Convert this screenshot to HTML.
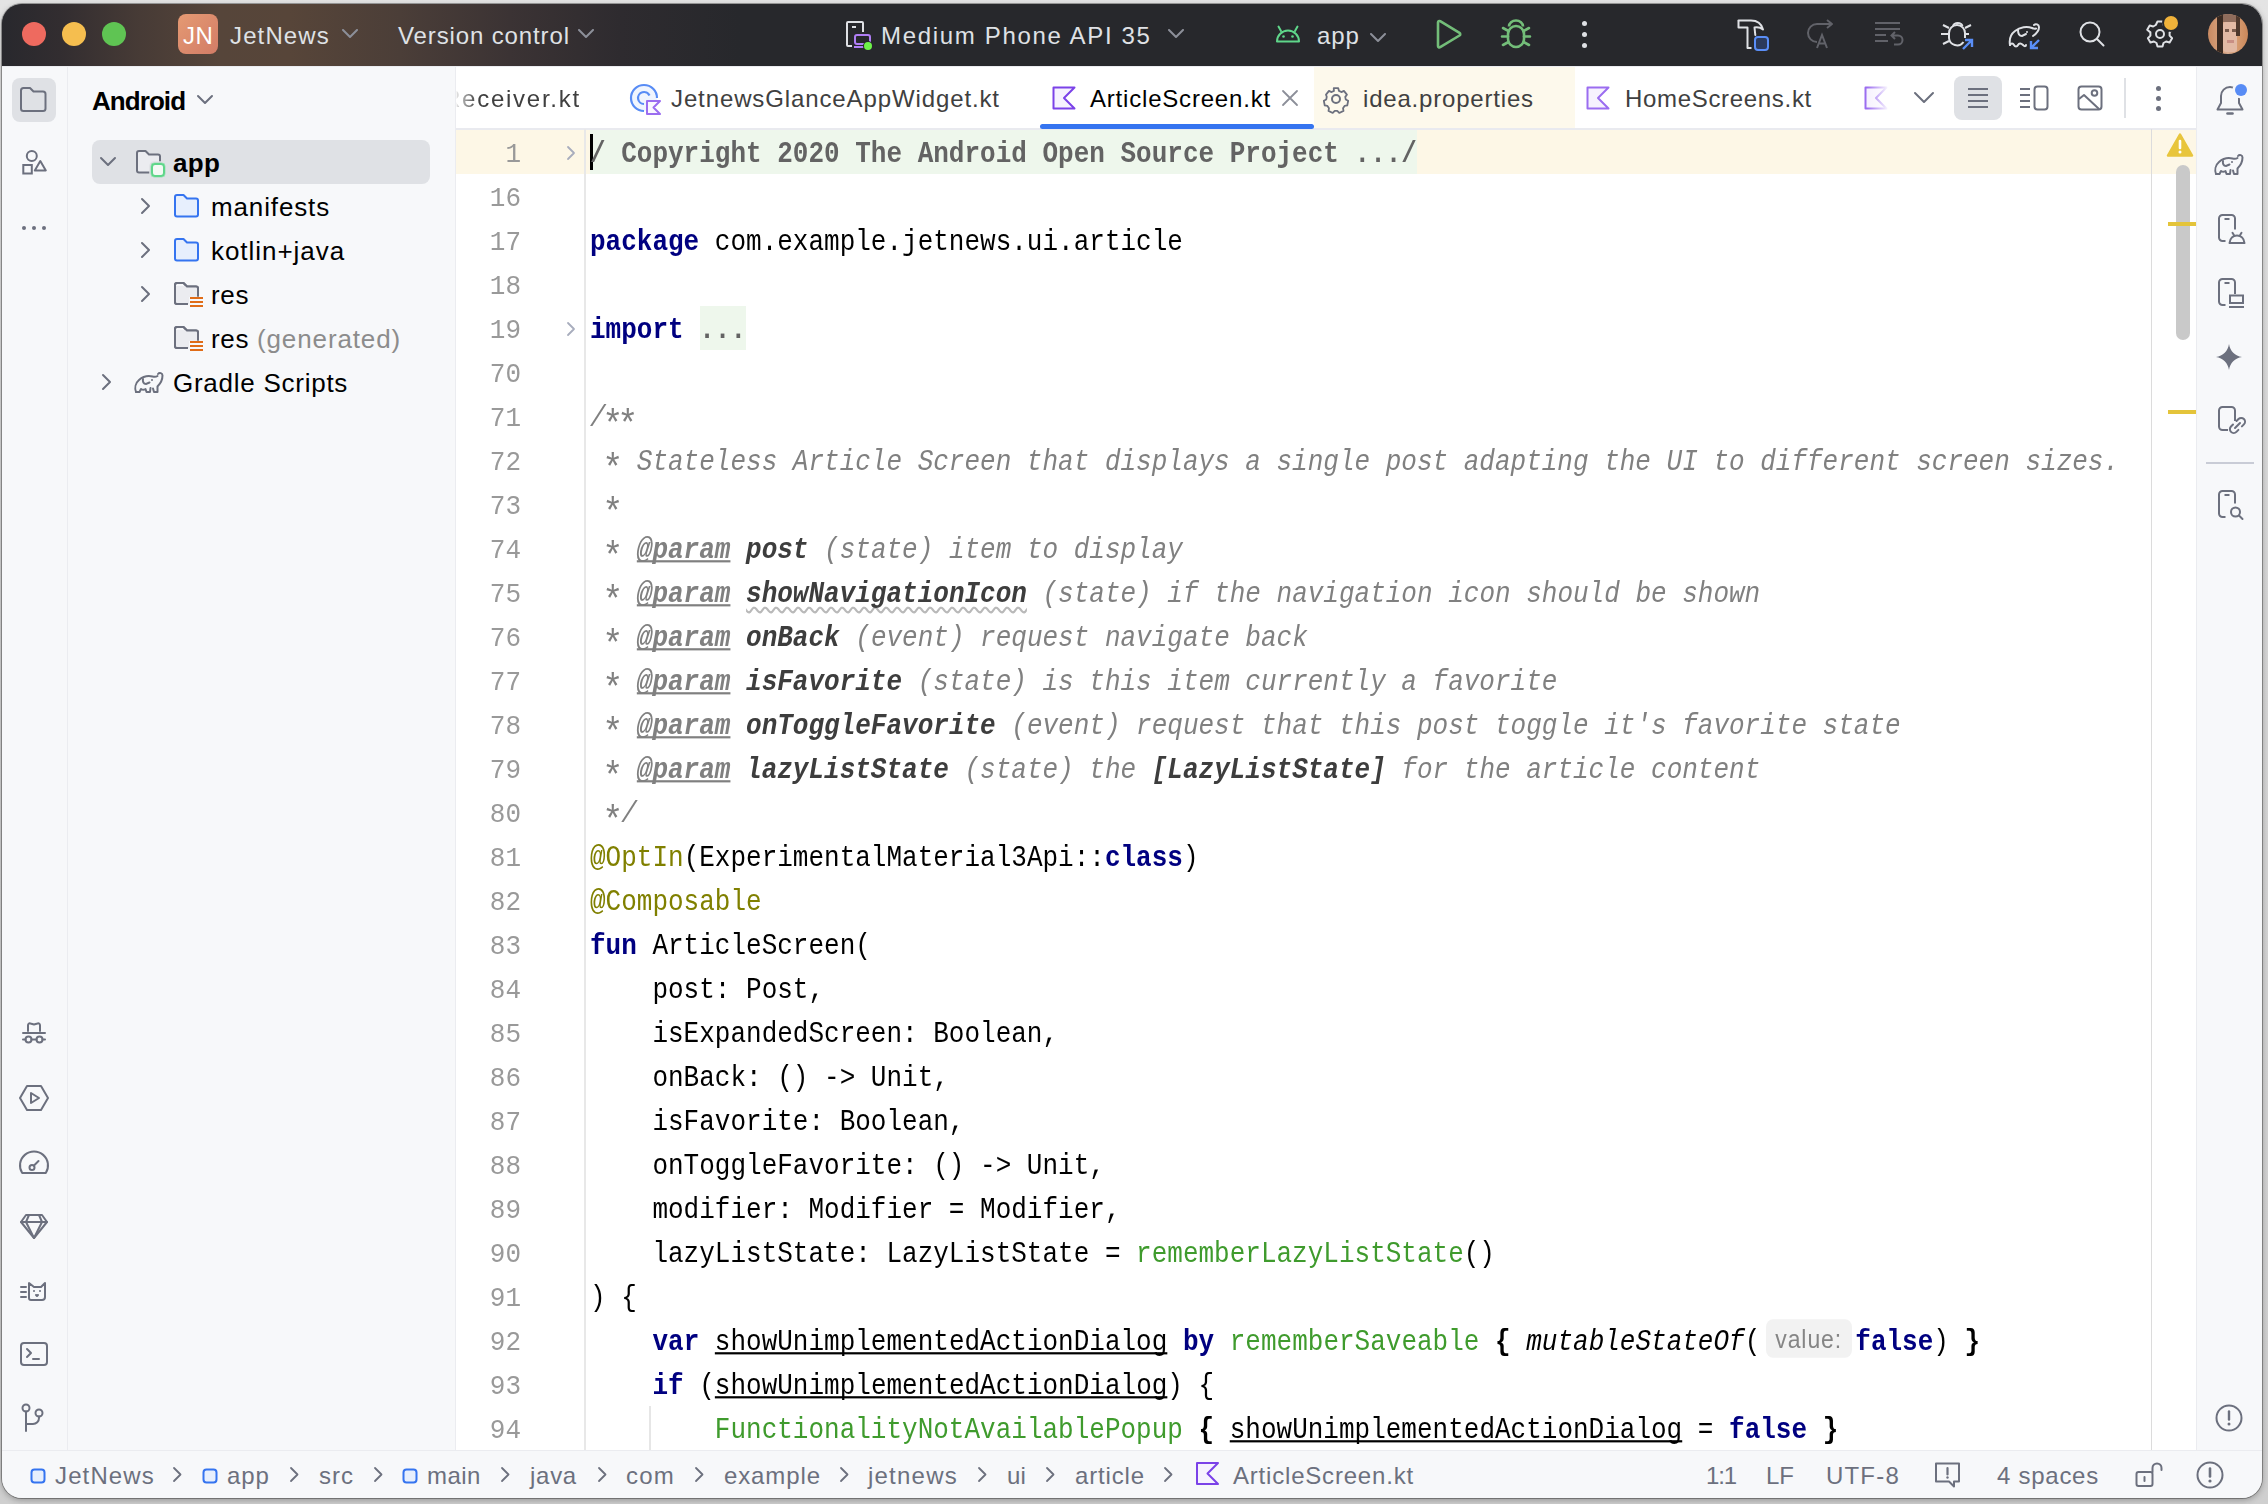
<!DOCTYPE html><html><head><meta charset="utf-8"><style>
html,body{margin:0;padding:0}
body{width:2268px;height:1504px;overflow:hidden;position:relative;background:linear-gradient(#e4e4e4 0px,#d6d6d6 40%,#cfcfcf 100%)}
#win{position:absolute;left:0;top:0;width:2268px;height:1504px;clip-path:inset(4px 6px 6px 2px round 20px);background:#f7f8fa}
#shadow{position:absolute;left:2px;top:4px;width:2260px;height:1494px;border-radius:20px;box-shadow:0 0 0 1px rgba(0,0,0,.3),0 2px 6px rgba(0,0,0,.3)}
</style></head><body><div id="shadow"></div><div id="win">
<div style="position:absolute;left:0px;top:0px;width:2268px;height:66px;background:#27282c;"></div>
<div style="position:absolute;left:0px;top:0px;width:900px;height:66px;background:linear-gradient(90deg, #28282d 0px, #322d30 60px, #473b36 140px, #56453a 220px, #574539 290px, #4b3e38 400px, #3b3334 510px, #2e2b2f 620px, #27282c 740px);"></div>
<div style="position:absolute;left:22px;top:22px;width:24px;height:24px;border-radius:50%;background:#ee6a5f"></div>
<div style="position:absolute;left:62px;top:22px;width:24px;height:24px;border-radius:50%;background:#f5be4f"></div>
<div style="position:absolute;left:102px;top:22px;width:24px;height:24px;border-radius:50%;background:#5fc453"></div>
<div style="position:absolute;left:178px;top:14px;width:40px;height:40px;border-radius:8px;background:linear-gradient(135deg,#e59a73,#d27c66)"></div>
<div style="position:absolute;left:183px;top:22.28px;font-family:'Liberation Sans',sans-serif;font-size:24px;line-height:normal;color:#ffffff;font-weight:normal;font-style:normal;letter-spacing:0.5px;white-space:pre;">JN</div>
<div style="position:absolute;left:230px;top:22.28px;font-family:'Liberation Sans',sans-serif;font-size:24px;line-height:normal;color:#dfe1e5;font-weight:normal;font-style:normal;letter-spacing:1.128px;white-space:pre;">JetNews</div>
<svg style="position:absolute;left:342px;top:29px;" width="17" height="10" viewBox="0 0 17 10" fill="none"><path d="M1 1l7 7 7-7" stroke="#8c8f99" stroke-width="2" stroke-linecap="round" stroke-linejoin="round"/></svg>
<div style="position:absolute;left:398px;top:22.28px;font-family:'Liberation Sans',sans-serif;font-size:24px;line-height:normal;color:#dfe1e5;font-weight:normal;font-style:normal;letter-spacing:0.878px;white-space:pre;">Version control</div>
<svg style="position:absolute;left:578px;top:29px;" width="17" height="10" viewBox="0 0 17 10" fill="none"><path d="M1 1l7 7 7-7" stroke="#8c8f99" stroke-width="2" stroke-linecap="round" stroke-linejoin="round"/></svg>
<svg style="position:absolute;left:840px;top:16px;" width="40" height="40" viewBox="0 0 40 40" fill="none"><path d="M12 30H8a1 1 0 0 1-1-1V7a1 1 0 0 1 1-1h14a1 1 0 0 1 1 1v9" stroke="#dfe1e5" stroke-width="2"/><rect x="12" y="10" width="4" height="2" fill="#dfe1e5"/><rect x="15" y="19" width="15" height="9" rx="2" stroke="#b07ef5" stroke-width="2"/><rect x="14" y="30" width="12" height="2" fill="#b07ef5"/><circle cx="28" cy="30" r="5" fill="#27282c"/><circle cx="28" cy="30" r="4" fill="#6ef24a"/></svg>
<div style="position:absolute;left:881px;top:22.28px;font-family:'Liberation Sans',sans-serif;font-size:24px;line-height:normal;color:#dfe1e5;font-weight:normal;font-style:normal;letter-spacing:1.673px;white-space:pre;">Medium Phone API 35</div>
<svg style="position:absolute;left:1168px;top:29px;" width="17" height="10" viewBox="0 0 17 10" fill="none"><path d="M1 1l7 7 7-7" stroke="#8c8f99" stroke-width="2" stroke-linecap="round" stroke-linejoin="round"/></svg>
<svg style="position:absolute;left:1274px;top:22px;" width="28" height="22" viewBox="0 0 28 22" fill="none"><path d="M3 19.5a11 11 0 0 1 22 0z" stroke="#5fd68a" stroke-width="2" stroke-linejoin="round"/><path d="M7 9L4.5 4.5M21 9l2.5-4.5" stroke="#5fd68a" stroke-width="2" stroke-linecap="round"/><circle cx="9.5" cy="14.5" r="1.3" fill="#5fd68a"/><circle cx="18.5" cy="14.5" r="1.3" fill="#5fd68a"/></svg>
<div style="position:absolute;left:1317px;top:22.28px;font-family:'Liberation Sans',sans-serif;font-size:24px;line-height:normal;color:#dfe1e5;font-weight:normal;font-style:normal;letter-spacing:0.959px;white-space:pre;">app</div>
<svg style="position:absolute;left:1370px;top:33px;" width="17" height="10" viewBox="0 0 17 10" fill="none"><path d="M1 1l7 7 7-7" stroke="#8c8f99" stroke-width="2" stroke-linecap="round" stroke-linejoin="round"/></svg>
<svg style="position:absolute;left:1432px;top:17px;" width="34" height="34" viewBox="0 0 34 34" fill="none"><path d="M6 5.5v23.5c0 1.2 1.2 1.8 2.2 1.2l19.3-11.7c1-.6 1-2 0-2.6L8.2 4.2C7.2 3.6 6 4.3 6 5.5z" stroke="#73bd79" stroke-width="2.6" stroke-linejoin="round"/></svg>
<svg style="position:absolute;left:1498px;top:17px;" width="36" height="34" viewBox="0 0 36 34" fill="none"><path d="M11 9.5a7 6 0 0 1 14 0" stroke="#73bd79" stroke-width="2.6"/><rect x="10" y="9" width="16" height="21" rx="8" stroke="#73bd79" stroke-width="2.6"/><path d="M10 19.5H4M26 19.5h6M10.5 14L5 11M25.5 14l5.5-3M10.5 25l-5.5 3M25.5 25l5.5 3" stroke="#73bd79" stroke-width="2.6" stroke-linecap="round"/></svg>
<div style="position:absolute;left:1581.5px;top:20.5px;width:5px;height:5px;border-radius:50%;background:#dfe1e5"></div>
<div style="position:absolute;left:1581.5px;top:31.5px;width:5px;height:5px;border-radius:50%;background:#dfe1e5"></div>
<div style="position:absolute;left:1581.5px;top:42.5px;width:5px;height:5px;border-radius:50%;background:#dfe1e5"></div>
<svg style="position:absolute;left:1734px;top:16px;" width="40" height="40" viewBox="0 0 40 40" fill="none"><path d="M4.5 4.5H17c6 0 10.5 3.5 12 9-2.5-2-5.5-2.5-8.5-2l.8 7.5" stroke="#dfe1e5" stroke-width="2" stroke-linejoin="round" stroke-linecap="round"/><path d="M4.5 4.5v7h9V32h4" stroke="#dfe1e5" stroke-width="2" stroke-linejoin="round"/><rect x="21" y="21" width="13" height="13" rx="3" fill="#2b3a5c" stroke="#5a8ef7" stroke-width="2"/></svg>
<svg style="position:absolute;left:1804px;top:16px;" width="34" height="36" viewBox="0 0 34 36" fill="none"><path d="M13 26a9 9 0 0 1 0-18h14" stroke="#616269" stroke-width="2"/><path d="M23 4l5 4-5 4" stroke="#616269" stroke-width="2" stroke-linejoin="round"/><path d="M13 32l5-13 5 13M15 27.5h6" stroke="#616269" stroke-width="2"/></svg>
<svg style="position:absolute;left:1872px;top:18px;" width="34" height="32" viewBox="0 0 34 32" fill="none"><path d="M3 5h25M3 11h25M3 17h11M3 23h13" stroke="#616269" stroke-width="2"/><path d="M22 26.5h4a4.5 4.5 0 0 0 0-9h-6M23 14l-3.5 3.5 3.5 3.5" stroke="#616269" stroke-width="2"/></svg>
<svg style="position:absolute;left:1938px;top:16px;" width="40" height="40" viewBox="0 0 40 40" fill="none"><path d="M15 10a5 4.5 0 0 1 9.5 0" stroke="#dfe1e5" stroke-width="2"/><path d="M25.5 26A8 8 0 0 1 11 22V17a8 8 0 0 1 16 0v5" stroke="#dfe1e5" stroke-width="2"/><path d="M11 18H3M11 12L5 9M11 25L5 28M27 12l6-3M27 18h4" stroke="#dfe1e5" stroke-width="2"/><path d="M25 33l9-9M27 24h7v7" stroke="#5a8ef7" stroke-width="2.4"/></svg>
<svg style="position:absolute;left:2005px;top:16px;" width="40" height="40" viewBox="0 0 40 40" fill="none"><path d="M5 29c-1-6 1-11 5-14 5-4 12-5 17-3 2 1 3 1 4 .5M29 9a3 3 0 0 1 5 2c0 4-3 7-6 9" stroke="#dfe1e5" stroke-width="2" stroke-linecap="round"/><path d="M5 29c1-2 3-2 4 0s3 2 4 0 3-2 5 0 3 1 3 0" stroke="#dfe1e5" stroke-width="2" stroke-linecap="round"/><path d="M13 14c0 3 1 6 4 6l4-2" stroke="#dfe1e5" stroke-width="2" stroke-linecap="round"/><circle cx="22" cy="16" r="1" fill="#dfe1e5"/><path d="M34 24l-8 8M26 25v7h7" stroke="#5a8ef7" stroke-width="2.4"/></svg>
<svg style="position:absolute;left:2076px;top:18px;" width="32" height="32" viewBox="0 0 32 32" fill="none"><circle cx="14" cy="14" r="9.5" stroke="#dfe1e5" stroke-width="2"/><path d="M21 21l6.5 6.5" stroke="#dfe1e5" stroke-width="2" stroke-linecap="round"/></svg>
<svg style="position:absolute;left:2142px;top:16px;" width="36" height="36" viewBox="0 0 36 36" fill="none"><path d="M15.5 5.5h5l1 3.5 2.6 1.5 3.5-1 2.5 4.3-2.5 2.6v3.2l2.5 2.6-2.5 4.3-3.5-1-2.6 1.5-1 3.5h-5l-1-3.5-2.6-1.5-3.5 1-2.5-4.3 2.5-2.6v-3.2L5.2 13.8l2.5-4.3 3.5 1 2.6-1.5z" stroke="#dfe1e5" stroke-width="2" stroke-linejoin="round"/><circle cx="18" cy="18" r="4" stroke="#dfe1e5" stroke-width="2"/></svg>
<div style="position:absolute;left:2164px;top:16px;width:14px;height:14px;border-radius:50%;background:#f0b23a;box-shadow:0 0 0 2px #27282c"></div>
<div style="position:absolute;left:2208px;top:14px;width:40px;height:40px;border-radius:50%;background:linear-gradient(90deg,#c98a62 0,#d8a07a 30%,#dcae92 50%,#d59a6f 75%,#c9875a 100%);overflow:hidden"><div style="position:absolute;left:9px;top:0px;width:6px;height:40px;background:#3a2a22"></div><div style="position:absolute;left:15px;top:0px;width:14px;height:8px;background:#8f6c5c"></div><div style="position:absolute;left:15px;top:8px;width:14px;height:30px;background:#e2b9a4;border-radius:3px"></div><div style="position:absolute;left:17px;top:15px;width:4px;height:3px;background:#7a5b4c"></div><div style="position:absolute;left:24px;top:15px;width:4px;height:3px;background:#7a5b4c"></div><div style="position:absolute;left:19px;top:26px;width:7px;height:3px;background:#c98f84"></div><div style="position:absolute;left:28px;top:2px;width:4px;height:20px;background:#4d372c"></div></div>
<div style="position:absolute;left:2px;top:66px;width:2260px;height:1px;background:#ebecf0;"></div>
<div style="position:absolute;left:67px;top:67px;width:1px;height:1383px;background:#ebecf0;"></div>
<div style="position:absolute;left:455px;top:67px;width:1px;height:1383px;background:#ebecf0;"></div>
<div style="position:absolute;left:456px;top:67px;width:1740px;height:1383px;background:#ffffff;"></div>
<div style="position:absolute;left:2196px;top:67px;width:1px;height:1383px;background:#ebecf0;"></div>
<div style="position:absolute;left:2px;top:1450px;width:2260px;height:1px;background:#ebecf0;"></div>
<div style="position:absolute;left:12px;top:78px;width:44px;height:44px;background:#dfe1e5;border-radius:8px"></div>
<svg style="position:absolute;left:19px;top:86px;" width="30" height="28" viewBox="0 0 30 28" fill="none"><path d="M2 4.5A2.5 2.5 0 0 1 4.5 2h6.5l3.5 3.5h9.5A2.5 2.5 0 0 1 26.5 8v14.5a2.5 2.5 0 0 1-2.5 2.5H4.5A2.5 2.5 0 0 1 2 22.5z" stroke="#6c707e" stroke-width="2" stroke-linejoin="round"/></svg>
<svg style="position:absolute;left:19px;top:148px;" width="30" height="30" viewBox="0 0 30 30" fill="none"><circle cx="12.8" cy="8" r="5" stroke="#6c707e" stroke-width="2"/><rect x="4.3" y="17" width="8.5" height="8.5" stroke="#6c707e" stroke-width="2"/><path d="M21.3 13l5.5 9.5h-11z" stroke="#6c707e" stroke-width="2" stroke-linejoin="round"/></svg>
<div style="position:absolute;left:22px;top:226px;width:4px;height:4px;border-radius:50%;background:#6c707e"></div>
<div style="position:absolute;left:32px;top:226px;width:4px;height:4px;border-radius:50%;background:#6c707e"></div>
<div style="position:absolute;left:42px;top:226px;width:4px;height:4px;border-radius:50%;background:#6c707e"></div>
<svg style="position:absolute;left:19px;top:1019px;" width="30" height="30" viewBox="0 0 30 30" fill="none"><path d="M9 12V6.5C9 5 10 4 11.5 4.5L15 5.5l3.5-1C20 4 21 5 21 6.5V12" stroke="#6c707e" stroke-width="2" stroke-linejoin="round" stroke-linecap="round"/><path d="M4 14h22" stroke="#6c707e" stroke-width="2" stroke-linejoin="round" stroke-linecap="round"/><circle cx="9.5" cy="20.5" r="3" stroke="#6c707e" stroke-width="2" stroke-linejoin="round" stroke-linecap="round"/><circle cx="20.5" cy="20.5" r="3" stroke="#6c707e" stroke-width="2" stroke-linejoin="round" stroke-linecap="round"/><path d="M12.5 20.5h5M4 20.5h2.5M23.5 20.5H26" stroke="#6c707e" stroke-width="2" stroke-linejoin="round" stroke-linecap="round"/></svg>
<svg style="position:absolute;left:18px;top:1082px;" width="32" height="32" viewBox="0 0 32 32" fill="none"><path d="M9 4h14l7 12-7 12H9L2 16z" stroke="#6c707e" stroke-width="2" stroke-linejoin="round" stroke-linecap="round"/><path d="M13 11v10l8-5z" stroke="#6c707e" stroke-width="2" stroke-linejoin="round" stroke-linecap="round"/></svg>
<svg style="position:absolute;left:18px;top:1150px;" width="32" height="32" viewBox="0 0 32 32" fill="none"><path d="M4.2 23A14 14 0 1 1 27.8 23z" stroke="#6c707e" stroke-width="2" stroke-linejoin="round" stroke-linecap="round"/><circle cx="14" cy="17.5" r="2.5" stroke="#6c707e" stroke-width="2" stroke-linejoin="round" stroke-linecap="round"/><path d="M16 15.5l4.5-4.5" stroke="#6c707e" stroke-width="2" stroke-linejoin="round" stroke-linecap="round"/></svg>
<svg style="position:absolute;left:18px;top:1210px;" width="32" height="32" viewBox="0 0 32 32" fill="none"><path d="M8 5h16l5 7-13 16L3 12z" stroke="#6c707e" stroke-width="2" stroke-linejoin="round" stroke-linecap="round"/><path d="M3 12h26M11 5l-3 7 8 16 8-16-3-7" stroke="#6c707e" stroke-width="2" stroke-linejoin="round" stroke-linecap="round"/></svg>
<svg style="position:absolute;left:18px;top:1274px;" width="32" height="32" viewBox="0 0 32 32" fill="none"><path d="M11 9v15c0 1 1 2 2 2h11c1.5 0 3-1 3-3V9l-4 4h-7z" stroke="#6c707e" stroke-width="2" stroke-linejoin="round" stroke-linecap="round"/><path d="M3 13h5M3 18h5M3 23h5" stroke="#6c707e" stroke-width="2" stroke-linejoin="round" stroke-linecap="round"/><circle cx="16" cy="17" r="1" fill="#6c707e"/><circle cx="22" cy="17" r="1" fill="#6c707e"/><path d="M18 21l1 1 1-1" stroke="#6c707e" stroke-width="2" stroke-linejoin="round" stroke-linecap="round"/></svg>
<svg style="position:absolute;left:18px;top:1338px;" width="32" height="32" viewBox="0 0 32 32" fill="none"><rect x="3" y="5" width="26" height="22" rx="3" stroke="#6c707e" stroke-width="2" stroke-linejoin="round" stroke-linecap="round"/><path d="M9 11l4 4-4 4M15 21h6" stroke="#6c707e" stroke-width="2" stroke-linejoin="round" stroke-linecap="round"/></svg>
<svg style="position:absolute;left:18px;top:1402px;" width="32" height="32" viewBox="0 0 32 32" fill="none"><circle cx="8" cy="6" r="3.5" stroke="#6c707e" stroke-width="2" stroke-linejoin="round" stroke-linecap="round"/><circle cx="21" cy="11" r="3.5" stroke="#6c707e" stroke-width="2" stroke-linejoin="round" stroke-linecap="round"/><path d="M8 9.5V29M8 22h7a6 6 0 0 0 6-6v-1.5" stroke="#6c707e" stroke-width="2" stroke-linejoin="round" stroke-linecap="round"/></svg>
<div style="position:absolute;left:92px;top:86.47px;font-family:'Liberation Sans',sans-serif;font-size:26px;line-height:normal;color:#000000;font-weight:bold;font-style:normal;letter-spacing:-0.938px;white-space:pre;">Android</div>
<svg style="position:absolute;left:196px;top:94px;" width="18" height="12" viewBox="0 0 18 12" fill="none"><path d="M2 2l7 7 7-7" stroke="#6c707e" stroke-width="2" stroke-linecap="round" stroke-linejoin="round"/></svg>
<div style="position:absolute;left:92px;top:140px;width:338px;height:44px;background:#dfe1e5;border-radius:8px"></div>
<svg style="position:absolute;left:98px;top:155px;" width="20" height="14" viewBox="0 0 20 14" fill="none"><path d="M3 3l7 7 7-7" stroke="#6c707e" stroke-width="2" stroke-linecap="round" stroke-linejoin="round"/></svg>
<svg style="position:absolute;left:135px;top:149px;" width="34" height="32" viewBox="0 0 34 32" fill="none"><path d="M2 4a2 2 0 0 1 2-2h6.5l3.5 3.5h9a2 2 0 0 1 2 2v14a2 2 0 0 1-2 2H4a2 2 0 0 1-2-2z" fill="#ebecf0" stroke="#6c707e" stroke-width="2" stroke-linejoin="round"/><rect x="16" y="14" width="14" height="14" rx="3.5" fill="#f3f9f4" stroke="#5fd68a" stroke-width="2" style="paint-order:stroke"/><rect x="15" y="13" width="16" height="16" rx="4" fill="none" stroke="#dfe1e5" stroke-width="1.5"/><rect x="17" y="15" width="12" height="12" rx="3" fill="#f3f9f4" stroke="#5fd68a" stroke-width="2"/></svg>
<div style="position:absolute;left:173px;top:148.47px;font-family:'Liberation Sans',sans-serif;font-size:26px;line-height:normal;color:#000000;font-weight:bold;font-style:normal;letter-spacing:0.285px;white-space:pre;">app</div>
<svg style="position:absolute;left:140px;top:197px;" width="12" height="18" viewBox="0 0 12 18" fill="none"><path d="M2 2l7 7-7 7" stroke="#6c707e" stroke-width="2" stroke-linecap="round" stroke-linejoin="round"/></svg>
<svg style="position:absolute;left:173px;top:193px;" width="30" height="28" viewBox="0 0 30 28" fill="none"><path d="M2 4a2 2 0 0 1 2-2h6.5l3.5 3.5h9a2 2 0 0 1 2 2v14a2 2 0 0 1-2 2H4a2 2 0 0 1-2-2z" fill="#e7effd" stroke="#3574f0" stroke-width="2" stroke-linejoin="round"/></svg>
<div style="position:absolute;left:211px;top:192.47px;font-family:'Liberation Sans',sans-serif;font-size:26px;line-height:normal;color:#000000;font-weight:normal;font-style:normal;letter-spacing:0.869px;white-space:pre;">manifests</div>
<svg style="position:absolute;left:140px;top:241px;" width="12" height="18" viewBox="0 0 12 18" fill="none"><path d="M2 2l7 7-7 7" stroke="#6c707e" stroke-width="2" stroke-linecap="round" stroke-linejoin="round"/></svg>
<svg style="position:absolute;left:173px;top:237px;" width="30" height="28" viewBox="0 0 30 28" fill="none"><path d="M2 4a2 2 0 0 1 2-2h6.5l3.5 3.5h9a2 2 0 0 1 2 2v14a2 2 0 0 1-2 2H4a2 2 0 0 1-2-2z" fill="#e7effd" stroke="#3574f0" stroke-width="2" stroke-linejoin="round"/></svg>
<div style="position:absolute;left:211px;top:236.47px;font-family:'Liberation Sans',sans-serif;font-size:26px;line-height:normal;color:#000000;font-weight:normal;font-style:normal;letter-spacing:0.955px;white-space:pre;">kotlin+java</div>
<svg style="position:absolute;left:140px;top:285px;" width="12" height="18" viewBox="0 0 12 18" fill="none"><path d="M2 2l7 7-7 7" stroke="#6c707e" stroke-width="2" stroke-linecap="round" stroke-linejoin="round"/></svg>
<svg style="position:absolute;left:173px;top:281px;" width="34" height="30" viewBox="0 0 34 30" fill="none"><path d="M2 4a2 2 0 0 1 2-2h6.5l3.5 3.5h9a2 2 0 0 1 2 2v8" fill="none" stroke="#6c707e" stroke-width="2" stroke-linejoin="round"/><path d="M2 4v17a2 2 0 0 0 2 2h11" stroke="#6c707e" stroke-width="2"/><path d="M3 5h21v11h-8v7H3z" fill="#ebecf0"/><path d="M2 4a2 2 0 0 1 2-2h6.5l3.5 3.5h9a2 2 0 0 1 2 2v8M2 4v17a2 2 0 0 0 2 2h11" fill="none" stroke="#6c707e" stroke-width="2" stroke-linejoin="round"/><path d="M17 17h13M17 21h13M17 25h13" stroke="#e06c17" stroke-width="2"/></svg>
<div style="position:absolute;left:211px;top:280.47px;font-family:'Liberation Sans',sans-serif;font-size:26px;line-height:normal;color:#000000;font-weight:normal;font-style:normal;letter-spacing:0.654px;white-space:pre;">res</div>
<svg style="position:absolute;left:173px;top:325px;" width="34" height="30" viewBox="0 0 34 30" fill="none"><path d="M2 4a2 2 0 0 1 2-2h6.5l3.5 3.5h9a2 2 0 0 1 2 2v8" fill="none" stroke="#6c707e" stroke-width="2" stroke-linejoin="round"/><path d="M2 4v17a2 2 0 0 0 2 2h11" stroke="#6c707e" stroke-width="2"/><path d="M3 5h21v11h-8v7H3z" fill="#ebecf0"/><path d="M2 4a2 2 0 0 1 2-2h6.5l3.5 3.5h9a2 2 0 0 1 2 2v8M2 4v17a2 2 0 0 0 2 2h11" fill="none" stroke="#6c707e" stroke-width="2" stroke-linejoin="round"/><path d="M17 17h13M17 21h13M17 25h13" stroke="#e06c17" stroke-width="2"/></svg>
<div style="position:absolute;left:211px;top:324.47px;font-family:'Liberation Sans',sans-serif;font-size:26px;line-height:normal;color:#000000;font-weight:normal;font-style:normal;letter-spacing:0.654px;white-space:pre;">res</div>
<div style="position:absolute;left:257px;top:324.47px;font-family:'Liberation Sans',sans-serif;font-size:26px;line-height:normal;color:#8c8c8c;font-weight:normal;font-style:normal;letter-spacing:0.878px;white-space:pre;">(generated)</div>
<svg style="position:absolute;left:101px;top:373px;" width="12" height="18" viewBox="0 0 12 18" fill="none"><path d="M2 2l7 7-7 7" stroke="#6c707e" stroke-width="2" stroke-linecap="round" stroke-linejoin="round"/></svg>
<svg style="position:absolute;left:132px;top:366px;" width="38" height="30" viewBox="0 0 38 30" fill="none"><path d="M4 26c-1.5-4-.5-9 3-12 4-3.5 9-4.5 13.5-3.5 2 .5 3.5.5 5-.5M26 8a2.5 2.5 0 0 1 4.5 1.5c0 4-2 8-5 11v5.5h-3.5l-1-3.5" stroke="#6c707e" stroke-width="2" stroke-linecap="round" stroke-linejoin="round"/><path d="M4 26h3.5l1.5-3c1.5 1 3 1 4.5 0l1 3H18l.5-4" stroke="#6c707e" stroke-width="2" stroke-linecap="round" stroke-linejoin="round"/><path d="M11 13c-.5 2.5.5 5 3 5l3.5-1.5" stroke="#6c707e" stroke-width="2" stroke-linecap="round"/><circle cx="20" cy="14" r="1" fill="#6c707e"/></svg>
<div style="position:absolute;left:173px;top:368.47px;font-family:'Liberation Sans',sans-serif;font-size:26px;line-height:normal;color:#000000;font-weight:normal;font-style:normal;letter-spacing:0.740px;white-space:pre;">Gradle Scripts</div>
<svg style="position:absolute;left:2212px;top:80px;" width="36" height="36" viewBox="0 0 36 36" fill="none"><path d="M5.5 29.5h25l-3.5-6.5v-7a9 9 0 0 0-18 0v7z" stroke="#6c707e" stroke-width="2" stroke-linejoin="round"/><path d="M15.5 33.5h5" stroke="#6c707e" stroke-width="2.6" stroke-linecap="round"/></svg>
<div style="position:absolute;left:2234.5px;top:83.5px;width:12px;height:12px;border-radius:50%;background:#588cf5;box-shadow:0 0 0 2.5px #f7f8fa"></div>
<svg style="position:absolute;left:2212px;top:148px;" width="36" height="32" viewBox="0 0 36 32" fill="none"><path d="M4 26c-1.5-4-.5-9 3-12 4-3.5 9-4.5 13.5-3.5 2 .5 3.5.5 5-.5M26 8a2.5 2.5 0 0 1 4.5 1.5c0 4-2 8-5 11v5.5h-3.5l-1-3.5" stroke="#6c707e" stroke-width="2" stroke-linecap="round" stroke-linejoin="round"/><path d="M4 26h3.5l1.5-3c1.5 1 3 1 4.5 0l1 3H18l.5-4" stroke="#6c707e" stroke-width="2" stroke-linecap="round" stroke-linejoin="round"/><path d="M11 13c-.5 2.5.5 5 3 5l3.5-1.5" stroke="#6c707e" stroke-width="2" stroke-linecap="round"/><circle cx="20" cy="14" r="1" fill="#6c707e"/></svg>
<svg style="position:absolute;left:2212px;top:212px;" width="36" height="36" viewBox="0 0 36 36" fill="none"><path d="M13.5 29H10.5a3.5 3.5 0 0 1-3.5-3.5v-19A3.5 3.5 0 0 1 10.5 3h9A3.5 3.5 0 0 1 23 6.5v11" stroke="#6c707e" stroke-width="2" stroke-linecap="butt"/><path d="M12.5 7h5" stroke="#6c707e" stroke-width="2"/><path d="M17.5 31c.5-4.5 3.5-7.5 7.5-7.5s7 3 7.5 7.5z" stroke="#6c707e" stroke-width="2" stroke-linejoin="round" stroke-linecap="round"/><path d="M20.5 20.8l1.5 2.4M29.5 20.8l-1.5 2.4" stroke="#6c707e" stroke-width="2" stroke-linecap="round"/></svg>
<svg style="position:absolute;left:2212px;top:276px;" width="36" height="36" viewBox="0 0 36 36" fill="none"><path d="M13.5 29H10.5a3.5 3.5 0 0 1-3.5-3.5v-19A3.5 3.5 0 0 1 10.5 3h9A3.5 3.5 0 0 1 23 6.5v11.5" stroke="#6c707e" stroke-width="2" stroke-linecap="butt"/><path d="M12.5 7h5" stroke="#6c707e" stroke-width="2"/><rect x="18" y="19.5" width="13" height="7.5" stroke="#6c707e" stroke-width="2"/><path d="M17 31h15" stroke="#6c707e" stroke-width="2"/></svg>
<svg style="position:absolute;left:2214px;top:342px;" width="30" height="30" viewBox="0 0 30 30" fill="none"><path d="M15 2c1 7 6 12 13 13-7 1-12 6-13 13-1-7-6-12-13-13 7-1 12-6 13-13z" fill="#6c707e"/></svg>
<svg style="position:absolute;left:2212px;top:403px;" width="36" height="36" viewBox="0 0 36 36" fill="none"><path d="M16 27H10.5A3.5 3.5 0 0 1 7 23.5v-16A3.5 3.5 0 0 1 10.5 4h9A3.5 3.5 0 0 1 23 7.5v10.5" stroke="#6c707e" stroke-width="2"/><path d="M21 21.5l-2 2a3.8 3.8 0 0 0 5.4 5.4l2-2M24.5 18l2-2a3.8 3.8 0 0 1 5.4 5.4l-2 2M23 25l5-5" stroke="#6c707e" stroke-width="2" stroke-linecap="round"/></svg>
<div style="position:absolute;left:2206px;top:462px;width:48px;height:1.5px;background:#c9ccd6;"></div>
<svg style="position:absolute;left:2212px;top:488px;" width="36" height="36" viewBox="0 0 36 36" fill="none"><path d="M13.5 29H10.5a3.5 3.5 0 0 1-3.5-3.5v-19A3.5 3.5 0 0 1 10.5 3h9A3.5 3.5 0 0 1 23 6.5v9" stroke="#6c707e" stroke-width="2" stroke-linecap="butt"/><path d="M12.5 7h5" stroke="#6c707e" stroke-width="2"/><circle cx="23.5" cy="24" r="4.5" stroke="#6c707e" stroke-width="2" stroke-linejoin="round" stroke-linecap="round"/><path d="M27 27.5l3.5 3.5" stroke="#6c707e" stroke-width="2" stroke-linejoin="round" stroke-linecap="round"/></svg>
<svg style="position:absolute;left:2214px;top:1403px;" width="30" height="30" viewBox="0 0 30 30" fill="none"><circle cx="15" cy="15" r="12.5" stroke="#6c707e" stroke-width="2"/><path d="M15 8.5v8" stroke="#6c707e" stroke-width="2.4" stroke-linecap="round"/><circle cx="15" cy="21" r="1.5" fill="#6c707e"/></svg>
<div style="position:absolute;left:456px;top:128px;width:1740px;height:2px;background:#e9eaef;"></div>
<div style="position:absolute;left:1314px;top:67px;width:261px;height:61px;background:#fdf9ec;"></div>
<div style="position:absolute;left:443px;top:85.28px;font-family:'Liberation Sans',sans-serif;font-size:24px;line-height:normal;color:#404040;font-weight:normal;font-style:normal;letter-spacing:1.746px;white-space:pre;-webkit-mask-image:linear-gradient(90deg,transparent 13px,rgba(0,0,0,.25) 15px,rgba(0,0,0,.6) 24px,#000 34px);mask-image:linear-gradient(90deg,transparent 13px,rgba(0,0,0,.25) 15px,rgba(0,0,0,.6) 24px,#000 34px)">Receiver.kt</div>
<svg style="position:absolute;left:628px;top:82px;" width="36" height="36" viewBox="0 0 36 36" fill="none"><circle cx="16" cy="16" r="13" fill="#f0f5fe"/><path d="M16 29A13 13 0 1 1 29 16" stroke="#588cf5" stroke-width="2.2"/><path d="M16 22a6 6 0 1 1 5.5-8.5" stroke="#588cf5" stroke-width="2.2"/><path d="M19 19h13l-6.5 6.5 6.5 6.5H19z" fill="#faf8ff" stroke="#9b6df0" stroke-width="2" stroke-linejoin="round"/></svg>
<div style="position:absolute;left:671px;top:85.28px;font-family:'Liberation Sans',sans-serif;font-size:24px;line-height:normal;color:#404040;font-weight:normal;font-style:normal;letter-spacing:0.884px;white-space:pre;">JetnewsGlanceAppWidget.kt</div>
<svg style="position:absolute;left:1051px;top:85px;" width="26" height="26" viewBox="0 0 26 26" fill="none"><path d="M2.5 2.5h21l-10.5 10.5 10.5 10.5h-21z" fill="#f6f2fe" stroke="#7b42e8" stroke-width="2" stroke-linejoin="round"/></svg>
<div style="position:absolute;left:1090px;top:85.28px;font-family:'Liberation Sans',sans-serif;font-size:24px;line-height:normal;color:#000000;font-weight:normal;font-style:normal;letter-spacing:0.804px;white-space:pre;">ArticleScreen.kt</div>
<svg style="position:absolute;left:1280px;top:88px;" width="20" height="20" viewBox="0 0 20 20" fill="none"><path d="M3 3l14 14M17 3L3 17" stroke="#8c8f99" stroke-width="1.8" stroke-linecap="round"/></svg>
<div style="position:absolute;left:1040px;top:124px;width:274px;height:5px;border-radius:3px;background:#3574f0"></div>
<svg style="position:absolute;left:1321px;top:84px;" width="30" height="30" viewBox="0 0 30 30" fill="none"><path d="M12.5 3h5l.8 3 2.6 1.3 2.9-1.3 3.3 4.2-1.8 2.4.5 2.9 2.7 1.5-1 5.2-3 .5-1.7 2.5.5 3-4.7 2.3-2.2-2.2h-2.8l-2.2 2.2-4.7-2.3.5-3-1.7-2.5-3-.5-1-5.2 2.7-1.5.5-2.9L3.9 10.2l3.3-4.2 2.9 1.3 2.6-1.3z" stroke="#6c707e" stroke-width="2" stroke-linejoin="round" transform="translate(15 15) scale(.9) translate(-15 -15)"/><circle cx="15" cy="15" r="4" stroke="#6c707e" stroke-width="2"/></svg>
<div style="position:absolute;left:1363px;top:85.28px;font-family:'Liberation Sans',sans-serif;font-size:24px;line-height:normal;color:#404040;font-weight:normal;font-style:normal;letter-spacing:0.810px;white-space:pre;">idea.properties</div>
<svg style="position:absolute;left:1585px;top:85px;" width="26" height="26" viewBox="0 0 26 26" fill="none"><path d="M2.5 2.5h21l-10.5 10.5 10.5 10.5h-21z" fill="#f6f2fe" stroke="#9b6df0" stroke-width="2" stroke-linejoin="round"/></svg>
<div style="position:absolute;left:1625px;top:85.28px;font-family:'Liberation Sans',sans-serif;font-size:24px;line-height:normal;color:#404040;font-weight:normal;font-style:normal;letter-spacing:0.680px;white-space:pre;">HomeScreens.kt</div>
<svg style="position:absolute;left:1863px;top:85px;" width="26" height="26" viewBox="0 0 26 26" fill="none"><defs><linearGradient id="fd" x1="0" x2="1"><stop offset="0" stop-color="#fff" stop-opacity="0"/><stop offset="1" stop-color="#fff" stop-opacity="1"/></linearGradient></defs><path d="M2.5 2.5h21l-10.5 10.5 10.5 10.5h-21z" fill="#f6f2fe" stroke="#9b6df0" stroke-width="2" stroke-linejoin="round"/><rect x="4" y="0" width="22" height="26" fill="url(#fd)"/></svg>
<svg style="position:absolute;left:1912px;top:90px;" width="24" height="16" viewBox="0 0 24 16" fill="none"><path d="M3 3l9 9 9-9" stroke="#6c707e" stroke-width="2" stroke-linecap="round" stroke-linejoin="round"/></svg>
<div style="position:absolute;left:1954px;top:76px;width:48px;height:44px;background:#dfe1e5;border-radius:8px"></div>
<div style="position:absolute;left:1968px;top:88px;width:20px;height:2px;background:#6c707e;"></div>
<div style="position:absolute;left:1968px;top:94px;width:20px;height:2px;background:#6c707e;"></div>
<div style="position:absolute;left:1968px;top:100px;width:20px;height:2px;background:#6c707e;"></div>
<div style="position:absolute;left:1968px;top:106px;width:20px;height:2px;background:#6c707e;"></div>
<div style="position:absolute;left:2020px;top:88px;width:10px;height:2px;background:#6c707e;"></div>
<div style="position:absolute;left:2020px;top:94px;width:10px;height:2px;background:#6c707e;"></div>
<div style="position:absolute;left:2020px;top:100px;width:10px;height:2px;background:#6c707e;"></div>
<div style="position:absolute;left:2020px;top:106px;width:10px;height:2px;background:#6c707e;"></div>
<svg style="position:absolute;left:2032px;top:84px;" width="18" height="28" viewBox="0 0 18 28" fill="none"><rect x="2.5" y="2.5" width="13" height="23" rx="3" stroke="#6c707e" stroke-width="2"/></svg>
<svg style="position:absolute;left:2076px;top:84px;" width="28" height="28" viewBox="0 0 28 28" fill="none"><rect x="2.5" y="2.5" width="23" height="23" rx="3" stroke="#6c707e" stroke-width="2"/><circle cx="18.5" cy="9" r="2.8" stroke="#6c707e" stroke-width="2"/><path d="M3 15l5-4 15 14" stroke="#6c707e" stroke-width="2" stroke-linejoin="round"/></svg>
<div style="position:absolute;left:2124px;top:78px;width:1.5px;height:40px;background:#dfe1e5;"></div>
<div style="position:absolute;left:2155.5px;top:85.5px;width:5px;height:5px;border-radius:50%;background:#6c707e"></div>
<div style="position:absolute;left:2155.5px;top:95.5px;width:5px;height:5px;border-radius:50%;background:#6c707e"></div>
<div style="position:absolute;left:2155.5px;top:105.5px;width:5px;height:5px;border-radius:50%;background:#6c707e"></div>
<div style="position:absolute;left:456px;top:130px;width:1740px;height:44px;background:#fdf7e6;"></div>
<div style="position:absolute;left:590px;top:130px;width:827px;height:44px;background:#eef7ec;"></div>
<div style="position:absolute;left:700px;top:306px;width:46px;height:44px;background:#eef7ec;"></div>
<div style="position:absolute;left:584px;top:129px;width:2px;height:1321px;background:#e8e8e8;"></div>
<div style="position:absolute;left:2151px;top:129px;width:1px;height:1321px;background:#dcdcdc;"></div>
<div style="position:absolute;left:590px;top:134px;width:3px;height:36px;background:#000000;"></div>
<svg style="position:absolute;left:566px;top:145px;" width="12" height="16" viewBox="0 0 12 16" fill="none"><path d="M2 2l6 6-6 6" stroke="#a8adbd" stroke-width="1.8" stroke-linecap="round" stroke-linejoin="round"/></svg>
<svg style="position:absolute;left:566px;top:321px;" width="12" height="16" viewBox="0 0 12 16" fill="none"><path d="M2 2l6 6-6 6" stroke="#a8adbd" stroke-width="1.8" stroke-linecap="round" stroke-linejoin="round"/></svg>
<div style="position:absolute;left:649px;top:1406px;width:2px;height:44px;background:#e6e6e6;"></div>
<svg style="position:absolute;left:2166px;top:132px;" width="28" height="26" viewBox="0 0 28 26" fill="none"><path d="M14 2.5L26 23.5H2z" fill="#e8c53c" stroke="#e8c53c" stroke-width="2.5" stroke-linejoin="round"/><path d="M14 9v7" stroke="#fff" stroke-width="2.6" stroke-linecap="round"/><circle cx="14" cy="20" r="1.5" fill="#fff"/></svg>
<div style="position:absolute;left:2176px;top:165px;width:14px;height:175px;border-radius:7px;background:#c9c9c9"></div>
<div style="position:absolute;left:2168px;top:222px;width:28px;height:4px;background:#e4c43a;"></div>
<div style="position:absolute;left:2168px;top:410px;width:28px;height:4px;background:#e4c43a;"></div>
<svg style="position:absolute;left:30px;top:1468px;" width="16" height="16" viewBox="0 0 16 16" fill="none"><rect x="1.5" y="1.5" width="13" height="13" rx="3" fill="#e7effd" stroke="#3574f0" stroke-width="2"/></svg>
<div style="position:absolute;left:55px;top:1462.28px;font-family:'Liberation Sans',sans-serif;font-size:24px;line-height:normal;color:#6c707e;font-weight:normal;font-style:normal;letter-spacing:1.128px;white-space:pre;">JetNews</div>
<svg style="position:absolute;left:172px;top:1466px;" width="12" height="17" viewBox="0 0 12 17" fill="none"><path d="M2 2l6.5 6.5L2 15" stroke="#6c707e" stroke-width="1.8" stroke-linecap="round" stroke-linejoin="round"/></svg>
<svg style="position:absolute;left:202px;top:1468px;" width="16" height="16" viewBox="0 0 16 16" fill="none"><rect x="1.5" y="1.5" width="13" height="13" rx="3" fill="#e7effd" stroke="#3574f0" stroke-width="2"/></svg>
<div style="position:absolute;left:227px;top:1462.28px;font-family:'Liberation Sans',sans-serif;font-size:24px;line-height:normal;color:#6c707e;font-weight:normal;font-style:normal;letter-spacing:0.959px;white-space:pre;">app</div>
<svg style="position:absolute;left:289px;top:1466px;" width="12" height="17" viewBox="0 0 12 17" fill="none"><path d="M2 2l6.5 6.5L2 15" stroke="#6c707e" stroke-width="1.8" stroke-linecap="round" stroke-linejoin="round"/></svg>
<div style="position:absolute;left:319px;top:1462.28px;font-family:'Liberation Sans',sans-serif;font-size:24px;line-height:normal;color:#6c707e;font-weight:normal;font-style:normal;letter-spacing:0.976px;white-space:pre;">src</div>
<svg style="position:absolute;left:373px;top:1466px;" width="12" height="17" viewBox="0 0 12 17" fill="none"><path d="M2 2l6.5 6.5L2 15" stroke="#6c707e" stroke-width="1.8" stroke-linecap="round" stroke-linejoin="round"/></svg>
<svg style="position:absolute;left:402px;top:1468px;" width="16" height="16" viewBox="0 0 16 16" fill="none"><rect x="1.5" y="1.5" width="13" height="13" rx="3" fill="#e7effd" stroke="#3574f0" stroke-width="2"/></svg>
<div style="position:absolute;left:427px;top:1462.28px;font-family:'Liberation Sans',sans-serif;font-size:24px;line-height:normal;color:#6c707e;font-weight:normal;font-style:normal;letter-spacing:0.475px;white-space:pre;">main</div>
<svg style="position:absolute;left:500px;top:1466px;" width="12" height="17" viewBox="0 0 12 17" fill="none"><path d="M2 2l6.5 6.5L2 15" stroke="#6c707e" stroke-width="1.8" stroke-linecap="round" stroke-linejoin="round"/></svg>
<div style="position:absolute;left:530px;top:1462.28px;font-family:'Liberation Sans',sans-serif;font-size:24px;line-height:normal;color:#6c707e;font-weight:normal;font-style:normal;letter-spacing:0.723px;white-space:pre;">java</div>
<svg style="position:absolute;left:597px;top:1466px;" width="12" height="17" viewBox="0 0 12 17" fill="none"><path d="M2 2l6.5 6.5L2 15" stroke="#6c707e" stroke-width="1.8" stroke-linecap="round" stroke-linejoin="round"/></svg>
<div style="position:absolute;left:626px;top:1462.28px;font-family:'Liberation Sans',sans-serif;font-size:24px;line-height:normal;color:#6c707e;font-weight:normal;font-style:normal;letter-spacing:1.193px;white-space:pre;">com</div>
<svg style="position:absolute;left:694px;top:1466px;" width="12" height="17" viewBox="0 0 12 17" fill="none"><path d="M2 2l6.5 6.5L2 15" stroke="#6c707e" stroke-width="1.8" stroke-linecap="round" stroke-linejoin="round"/></svg>
<div style="position:absolute;left:724px;top:1462.28px;font-family:'Liberation Sans',sans-serif;font-size:24px;line-height:normal;color:#6c707e;font-weight:normal;font-style:normal;letter-spacing:0.886px;white-space:pre;">example</div>
<svg style="position:absolute;left:839px;top:1466px;" width="12" height="17" viewBox="0 0 12 17" fill="none"><path d="M2 2l6.5 6.5L2 15" stroke="#6c707e" stroke-width="1.8" stroke-linecap="round" stroke-linejoin="round"/></svg>
<div style="position:absolute;left:868px;top:1462.28px;font-family:'Liberation Sans',sans-serif;font-size:24px;line-height:normal;color:#6c707e;font-weight:normal;font-style:normal;letter-spacing:1.221px;white-space:pre;">jetnews</div>
<svg style="position:absolute;left:977px;top:1466px;" width="12" height="17" viewBox="0 0 12 17" fill="none"><path d="M2 2l6.5 6.5L2 15" stroke="#6c707e" stroke-width="1.8" stroke-linecap="round" stroke-linejoin="round"/></svg>
<div style="position:absolute;left:1007px;top:1462.28px;font-family:'Liberation Sans',sans-serif;font-size:24px;line-height:normal;color:#6c707e;font-weight:normal;font-style:normal;letter-spacing:0.120px;white-space:pre;">ui</div>
<svg style="position:absolute;left:1045px;top:1466px;" width="12" height="17" viewBox="0 0 12 17" fill="none"><path d="M2 2l6.5 6.5L2 15" stroke="#6c707e" stroke-width="1.8" stroke-linecap="round" stroke-linejoin="round"/></svg>
<div style="position:absolute;left:1075px;top:1462.28px;font-family:'Liberation Sans',sans-serif;font-size:24px;line-height:normal;color:#6c707e;font-weight:normal;font-style:normal;letter-spacing:0.843px;white-space:pre;">article</div>
<svg style="position:absolute;left:1163px;top:1466px;" width="12" height="17" viewBox="0 0 12 17" fill="none"><path d="M2 2l6.5 6.5L2 15" stroke="#6c707e" stroke-width="1.8" stroke-linecap="round" stroke-linejoin="round"/></svg>
<svg style="position:absolute;left:1195px;top:1461px;" width="26" height="26" viewBox="0 0 26 26" fill="none"><path d="M2 2h21l-10.5 10.5 10.5 10.5h-21z" fill="#f6f2fe" stroke="#7b42e8" stroke-width="2" stroke-linejoin="round"/></svg>
<div style="position:absolute;left:1233px;top:1462.28px;font-family:'Liberation Sans',sans-serif;font-size:24px;line-height:normal;color:#6c707e;font-weight:normal;font-style:normal;letter-spacing:0.804px;white-space:pre;">ArticleScreen.kt</div>
<div style="position:absolute;left:1706px;top:1462.28px;font-family:'Liberation Sans',sans-serif;font-size:24px;line-height:normal;color:#6c707e;font-weight:normal;font-style:normal;letter-spacing:-1.148px;white-space:pre;">1:1</div>
<div style="position:absolute;left:1766px;top:1462.28px;font-family:'Liberation Sans',sans-serif;font-size:24px;line-height:normal;color:#6c707e;font-weight:normal;font-style:normal;letter-spacing:-0.044px;white-space:pre;">LF</div>
<div style="position:absolute;left:1826px;top:1462.28px;font-family:'Liberation Sans',sans-serif;font-size:24px;line-height:normal;color:#6c707e;font-weight:normal;font-style:normal;letter-spacing:1.186px;white-space:pre;">UTF-8</div>
<svg style="position:absolute;left:1933px;top:1460px;" width="30" height="30" viewBox="0 0 30 30" fill="none"><path d="M3 3.5h23v18h-5v5l-5-5H3z" stroke="#6c707e" stroke-width="2" stroke-linejoin="round"/><path d="M14.5 8v6.5" stroke="#6c707e" stroke-width="2.2" stroke-linecap="round"/><circle cx="14.5" cy="17.5" r="1.2" fill="#6c707e"/></svg>
<div style="position:absolute;left:1997px;top:1462.28px;font-family:'Liberation Sans',sans-serif;font-size:24px;line-height:normal;color:#6c707e;font-weight:normal;font-style:normal;letter-spacing:0.733px;white-space:pre;">4 spaces</div>
<svg style="position:absolute;left:2134px;top:1459px;" width="30" height="30" viewBox="0 0 30 30" fill="none"><rect x="2.5" y="13" width="16" height="14" rx="2" stroke="#6c707e" stroke-width="2"/><path d="M18.5 13V9a4.5 4.5 0 0 1 9 0v2" stroke="#6c707e" stroke-width="2" stroke-linecap="round"/><path d="M10.5 18v4" stroke="#6c707e" stroke-width="2" stroke-linecap="round"/></svg>
<svg style="position:absolute;left:2195px;top:1460px;" width="30" height="30" viewBox="0 0 30 30" fill="none"><circle cx="15" cy="15" r="12.5" stroke="#6c707e" stroke-width="2"/><path d="M15 8.5v8" stroke="#6c707e" stroke-width="2.6" stroke-linecap="round"/><circle cx="15" cy="21" r="1.6" fill="#6c707e"/></svg>
<style>
.ln{position:absolute;left:457px;width:64px;transform:scaleY(1.05);transform-origin:0 22px;text-align:right;font-family:'Liberation Mono',monospace;font-size:26px;line-height:normal;color:#999999;white-space:pre}
.cl{position:absolute;left:590px;font-family:'Liberation Mono',monospace;font-size:26px;line-height:normal;color:#000;white-space:pre;transform:scaleY(1.1);transform-origin:0 22px}
.k{color:#000080;font-weight:bold}
.c{color:#808080;font-style:italic}
.dt{color:#808080;font-weight:bold;font-style:italic;text-decoration:underline;text-decoration-thickness:2px;text-underline-offset:2px;text-decoration-skip-ink:none}
.dp{color:#3d3d3d;font-weight:bold;font-style:italic}
.an{color:#808000}
.cf{color:#3f9b2d}
.u{text-decoration:underline;text-decoration-thickness:2px;text-underline-offset:2px;text-decoration-skip-ink:none}
.b{font-weight:bold}
.it{font-style:italic}
.ast{display:inline-block;width:15.6px;text-align:center;font-style:normal;transform:translate(-1px,7px) scale(1.35)}
.fold{color:#636363;font-weight:bold}
.wv{text-decoration:underline wavy #b9b9b9;text-decoration-thickness:1.5px;text-underline-offset:4px;text-decoration-skip-ink:none}
.hint{display:inline-block;width:86px;height:35px;margin:0 3px 0 6px;vertical-align:top;border-radius:7px;background:#f2f2f2;position:relative;top:-6px}
.hint span{position:absolute;left:9px;top:5px;font-family:'Liberation Sans',sans-serif;font-size:23px;line-height:normal;color:#858585;font-style:normal;font-weight:normal;letter-spacing:0.9px}
</style>
<div class="ln" style="top:140.35px">1</div>
<div class="cl" style="top:140.35px"><span class="fold">/ Copyright 2020 The Android Open Source Project .../</span></div>
<div class="ln" style="top:184.35px">16</div>
<div class="ln" style="top:228.35px">17</div>
<div class="cl" style="top:228.35px"><span class="k">package</span> com.example.jetnews.ui.article</div>
<div class="ln" style="top:272.36px">18</div>
<div class="ln" style="top:316.36px">19</div>
<div class="cl" style="top:316.36px"><span class="k">import</span> <span class="fold">...</span></div>
<div class="ln" style="top:360.36px">70</div>
<div class="ln" style="top:404.36px">71</div>
<div class="cl" style="top:404.36px"><span class="c">/<span class="ast">*</span><span class="ast">*</span></span></div>
<div class="ln" style="top:448.36px">72</div>
<div class="cl" style="top:448.36px"><span class="c"> <span class="ast">*</span> Stateless Article Screen that displays a single post adapting the UI to different screen sizes.</span></div>
<div class="ln" style="top:492.36px">73</div>
<div class="cl" style="top:492.36px"><span class="c"> <span class="ast">*</span></span></div>
<div class="ln" style="top:536.36px">74</div>
<div class="cl" style="top:536.36px"><span class="c"> <span class="ast">*</span> </span><span class="dt">@param</span><span class="c"> </span><span class="dp">post</span><span class="c"> (state) item to display</span></div>
<div class="ln" style="top:580.36px">75</div>
<div class="cl" style="top:580.36px"><span class="c"> <span class="ast">*</span> </span><span class="dt">@param</span><span class="c"> </span><span class="dp wv">showNavigationIcon</span><span class="c"> (state) if the navigation icon should be shown</span></div>
<div class="ln" style="top:624.36px">76</div>
<div class="cl" style="top:624.36px"><span class="c"> <span class="ast">*</span> </span><span class="dt">@param</span><span class="c"> </span><span class="dp">onBack</span><span class="c"> (event) request navigate back</span></div>
<div class="ln" style="top:668.36px">77</div>
<div class="cl" style="top:668.36px"><span class="c"> <span class="ast">*</span> </span><span class="dt">@param</span><span class="c"> </span><span class="dp">isFavorite</span><span class="c"> (state) is this item currently a favorite</span></div>
<div class="ln" style="top:712.36px">78</div>
<div class="cl" style="top:712.36px"><span class="c"> <span class="ast">*</span> </span><span class="dt">@param</span><span class="c"> </span><span class="dp">onToggleFavorite</span><span class="c"> (event) request that this post toggle it&#x27;s favorite state</span></div>
<div class="ln" style="top:756.36px">79</div>
<div class="cl" style="top:756.36px"><span class="c"> <span class="ast">*</span> </span><span class="dt">@param</span><span class="c"> </span><span class="dp">lazyListState</span><span class="c"> (state) the </span><span class="dp">[LazyListState]</span><span class="c"> for the article content</span></div>
<div class="ln" style="top:800.36px">80</div>
<div class="cl" style="top:800.36px"><span class="c"> <span class="ast">*</span>/</span></div>
<div class="ln" style="top:844.36px">81</div>
<div class="cl" style="top:844.36px"><span class="an">@OptIn</span>(ExperimentalMaterial3Api::<span class="k">class</span>)</div>
<div class="ln" style="top:888.36px">82</div>
<div class="cl" style="top:888.36px"><span class="an">@Composable</span></div>
<div class="ln" style="top:932.36px">83</div>
<div class="cl" style="top:932.36px"><span class="k">fun</span> ArticleScreen(</div>
<div class="ln" style="top:976.36px">84</div>
<div class="cl" style="top:976.36px">    post: Post,</div>
<div class="ln" style="top:1020.36px">85</div>
<div class="cl" style="top:1020.36px">    isExpandedScreen: Boolean,</div>
<div class="ln" style="top:1064.36px">86</div>
<div class="cl" style="top:1064.36px">    onBack: () -&gt; Unit,</div>
<div class="ln" style="top:1108.36px">87</div>
<div class="cl" style="top:1108.36px">    isFavorite: Boolean,</div>
<div class="ln" style="top:1152.36px">88</div>
<div class="cl" style="top:1152.36px">    onToggleFavorite: () -&gt; Unit,</div>
<div class="ln" style="top:1196.36px">89</div>
<div class="cl" style="top:1196.36px">    modifier: Modifier = Modifier,</div>
<div class="ln" style="top:1240.36px">90</div>
<div class="cl" style="top:1240.36px">    lazyListState: LazyListState = <span class="cf">rememberLazyListState</span>()</div>
<div class="ln" style="top:1284.36px">91</div>
<div class="cl" style="top:1284.36px">) {</div>
<div class="ln" style="top:1328.36px">92</div>
<div class="cl" style="top:1328.36px">    <span class="k">var</span> <span class="u">showUnimplementedActionDialog</span> <span class="k">by</span> <span class="cf">rememberSaveable</span> <span class="b">{</span> <span class="it">mutableStateOf</span>(<span class="hint"><span>value:</span></span><span class="k">false</span>) <span class="b">}</span></div>
<div class="ln" style="top:1372.36px">93</div>
<div class="cl" style="top:1372.36px">    <span class="k">if</span> (<span class="u">showUnimplementedActionDialog</span>) {</div>
<div class="ln" style="top:1416.36px">94</div>
<div class="cl" style="top:1416.36px">        <span class="cf">FunctionalityNotAvailablePopup</span> <span class="b">{</span> <span class="u">showUnimplementedActionDialog</span> = <span class="k">false</span> <span class="b">}</span></div>
</div></body></html>
